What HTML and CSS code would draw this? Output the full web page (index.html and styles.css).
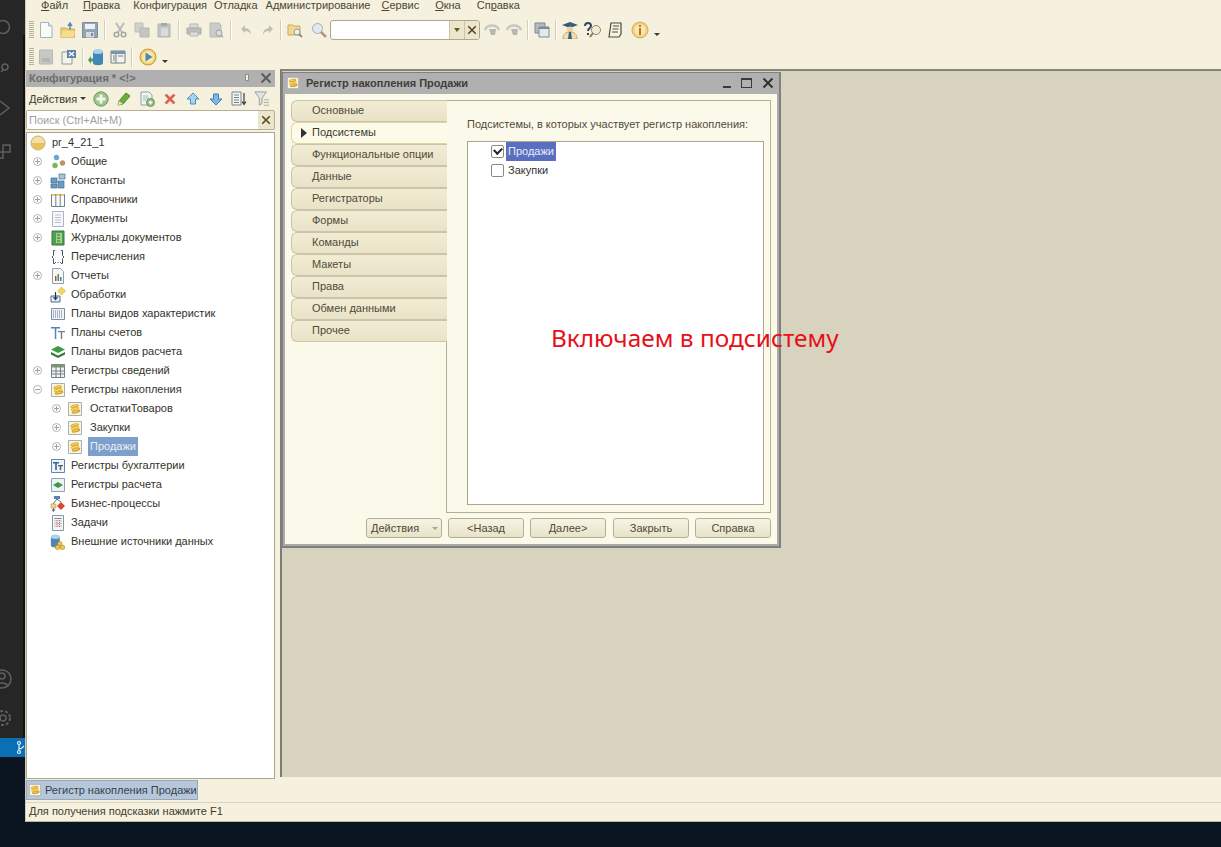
FILE: index.html
```html
<!DOCTYPE html>
<html lang="ru">
<head>
    <meta charset="UTF-8">
    <title>Конфигуратор</title>
    <link rel="stylesheet" href="styles.css">
</head>
<body>

<svg class="defs" width="0" height="0">
    <symbol id="i-x" viewBox="0 0 12 12"><path d="M1.500 1.500l9 9M10.500 1.500l-9 9" fill="none" stroke="currentColor" stroke-width="2"/></symbol>
    <symbol id="i-new" viewBox="0 0 16 16"><path d="M2.500.5h8l3.500 3.500v11.500H2.500z" fill="#fbfbf5" stroke="#9db2c6"/><path d="M10.500.5V4H14" fill="#dfe7ee" stroke="#9db2c6"/></symbol>
    <symbol id="i-open" viewBox="0 0 16 16"><path d="M1 6h5l1 1h7.500v8.500H1z" fill="#f0cf72" stroke="#c9ab5e"/><path d="M2 9h13l-1 6.500H1z" fill="#f7dc8e"/><path d="M10 8V2M8 4l2-3 2 3" fill="none" stroke="#5a8ab0" stroke-width="1.500"/></symbol>
    <symbol id="i-save" viewBox="0 0 16 16"><path d="M.5.500h15v15H.5z" fill="#93a5b4" stroke="#7d8d9a"/><path d="M3 2h10v5H3z" fill="#eef1f3"/><path d="M4 10h8v5.500H4z" fill="#d4dade"/><path d="M9 11h2v3H9z" fill="#7b8a96"/></symbol>
    <symbol id="i-cut" viewBox="0 0 16 16"><path d="M4 1l6 9M12 1l-6 9" stroke="#b9bbba" stroke-width="2" fill="none"/><circle cx="4.500" cy="12.500" r="2.300" fill="none" stroke="#a3a6a6" stroke-width="1.500"/><circle cx="11.500" cy="12.500" r="2.300" fill="none" stroke="#a3a6a6" stroke-width="1.500"/></symbol>
    <symbol id="i-copy" viewBox="0 0 16 16"><path d="M1 1h8v9H1z" fill="#cfd1cf" stroke="#bcbeba"/><path d="M6 6h9v9H6z" fill="#c2c5c4" stroke="#b4b6b4"/></symbol>
    <symbol id="i-paste" viewBox="0 0 16 16"><path d="M2 2h12v13H2z" fill="#c2c5c3" stroke="#b0b3b1"/><path d="M5 1h6v3H5z" fill="#a3a7a6"/><path d="M5 6h7v8H5z" fill="#d9dbd8"/></symbol>
    <symbol id="i-print" viewBox="0 0 16 16"><path d="M4 2h8v4H4z" fill="#dcddda" stroke="#b5b7b4"/><path d="M1 6h14v6H1z" fill="#bbbebc" stroke="#a9acaa"/><path d="M4 10h8v4H4z" fill="#dfe0dd" stroke="#b5b7b4"/></symbol>
    <symbol id="i-preview" viewBox="0 0 16 16"><path d="M2 1h9l2 2v12H2z" fill="#c9ccca" stroke="#b8bbb9"/><circle cx="11" cy="11" r="3" fill="#dcdedb" stroke="#a0a3a1"/><path d="M13 13l2 2" stroke="#a0a3a1" stroke-width="1.500"/></symbol>
    <symbol id="i-undo" viewBox="0 0 16 16"><path d="M3 7l4-4v3c3 0 6 2 6 7-1-3-3-4-6-4v2z" fill="#bfc0b8"/></symbol>
    <symbol id="i-redo" viewBox="0 0 16 16"><path d="M13 7L9 3v3c-3 0-6 2-6 7 1-3 3-4 6-4v2z" fill="#bfc0b8"/></symbol>
    <symbol id="i-find" viewBox="0 0 16 16"><path d="M1 3h5l1 1h6v9H1z" fill="#f3d88c" stroke="#c4a968"/><circle cx="10" cy="10" r="3" fill="#e6eef2" stroke="#8f9dab"/><path d="M12 12l3 3" stroke="#a58a66" stroke-width="2"/></symbol>
    <symbol id="i-search" viewBox="0 0 16 16"><circle cx="6.500" cy="6.500" r="5" fill="#dfe9ef" stroke="#a2aeb9"/><path d="M10 10l5 5" stroke="#ab9c84" stroke-width="2.500"/></symbol>
    <symbol id="i-nav" viewBox="0 0 16 16"><path d="M1 8c2-6 12-6 14 0" fill="none" stroke="#c6c7c0" stroke-width="2.500"/><path d="M5 7h7l-1 6H7z" fill="#b5b7b1"/></symbol>
    <symbol id="i-windows" viewBox="0 0 16 16"><path d="M1 1h10v10H1z" fill="#b2bbc3" stroke="#7f8a94"/><path d="M5 5h10v10H5z" fill="#e4e9ed" stroke="#7f8a94"/><path d="M5 5h10v2H5z" fill="#7f8a94"/></symbol>
    <symbol id="i-cap" viewBox="0 0 18 18"><path d="M1 4l8-3 8 3-8 3z" fill="#2f5f7c"/><circle cx="9" cy="8.500" r="3" fill="#f2cf9a"/><path d="M2 18c0-5 3-7 7-7s7 2 7 7z" fill="#efe2b0" stroke="#c4a968"/><path d="M8 11h2l1 7H7z" fill="#3a5f7a"/></symbol>
    <symbol id="i-helpfind" viewBox="0 0 18 18"><path d="M1 5c0-4 6-4 6 0 0 2-3 2-3 5" fill="none" stroke="#33475c" stroke-width="2"/><path d="M3 12h2v2H3z" fill="#33475c"/><circle cx="12" cy="9" r="4.500" fill="#f3ecd2" stroke="#8a8772"/><path d="M9 12l-3 4" stroke="#8a7a52" stroke-width="2"/></symbol>
    <symbol id="i-note" viewBox="0 0 16 16"><path d="M4 1h10v11l-2 3H2z" fill="#f8f4e2" stroke="#4d4a3d" stroke-width="1.200"/><path d="M6 4h6M5.500 7h6M5 10h6" stroke="#4d4a3d"/></symbol>
    <symbol id="i-info" viewBox="0 0 18 18"><circle cx="9" cy="9" r="8" fill="#f3d27c" stroke="#d4ad63"/><circle cx="9" cy="9" r="5.500" fill="#f9e8b4"/><path d="M8 4h2v2H8zM8 7h2v7H8z" fill="#b8722a"/></symbol>
    <symbol id="i-sheet" viewBox="0 0 16 16"><path d="M1.500 1h13v14h-13z" fill="#c6c8c5" stroke="#b6b8b5"/><path d="M4 9h8v4H4z" fill="#b4b6b4"/></symbol>
    <symbol id="i-form" viewBox="0 0 16 16"><path d="M1 3h10v12H1z" fill="#f3f3ea" stroke="#8d9aa5"/><path d="M6 1h9v8H6z" fill="#5d84a6"/><path d="M8 3l5 4M13 3L8 7" stroke="#fff" stroke-width="1.400"/></symbol>
    <symbol id="i-db" viewBox="0 0 18 18"><path d="M6 3v12c0 3 10 3 10 0V3z" fill="#3f87b8"/><ellipse cx="11" cy="3.500" rx="5" ry="2.500" fill="#a9d2e8"/><path d="M1 12l3-4v2.500h2v3H4V16z" fill="#4fa04f"/></symbol>
    <symbol id="i-list" viewBox="0 0 16 16"><path d="M1 2h14v12H1z" fill="#f4f3e8" stroke="#70808e"/><path d="M1 2h14v3H1z" fill="#7a95ad"/><path d="M6 5v9" stroke="#70808e"/><path d="M3 7h2M3 9h2M3 11h2M8 7h5" stroke="#70808e"/></symbol>
    <symbol id="i-run" viewBox="0 0 18 18"><circle cx="9" cy="9" r="8" fill="#f1cf6f" stroke="#c39b3f"/><circle cx="9" cy="9" r="6" fill="#f8e7ac"/><path d="M6.500 4.500l7 4.500-7 4.500z" fill="#4e86b8"/></symbol>
    <symbol id="i-add" viewBox="0 0 16 16"><circle cx="8" cy="8" r="7.200" fill="#9cc48a" stroke="#6f9a62"/><path d="M6.500 3.500h3v3h3v3h-3v3h-3v-3h-3v-3h3z" fill="#f0f6ea"/></symbol>
    <symbol id="i-edit" viewBox="0 0 16 16"><path d="M3 10l7-8 4 3-7 8-5 1z" fill="#6cae3e" stroke="#4d8a2b"/><path d="M3 10l4 3-5 1z" fill="#e9e3c2"/></symbol>
    <symbol id="i-addpage" viewBox="0 0 16 16"><path d="M2 1h8l3 3v10H2z" fill="#f3f4ee" stroke="#8da0b0"/><path d="M4 5h5M4 7h6M4 9h3" stroke="#a9b6c0"/><circle cx="11.500" cy="11.500" r="4" fill="#89b87a" stroke="#6f9a62"/><path d="M10.700 9.500h1.600v1.200h1.200v1.600h-1.200v1.200h-1.600v-1.200H9.500v-1.600h1.200z" fill="#fff"/></symbol>
    <symbol id="i-del" viewBox="0 0 16 16"><path d="M3 4.500L4.500 3 8 6.500 11.500 3 13 4.500 9.500 8l3.500 3.500-1.500 1.500L8 9.500 4.500 13 3 11.500 6.500 8z" fill="#dc5e50" stroke="#c24a3d" stroke-width=".5"/></symbol>
    <symbol id="i-up" viewBox="0 0 16 16"><path d="M8 2l6 6h-3.500v5h-5V8H2z" fill="#a9d4ee" stroke="#4b8dbd"/></symbol>
    <symbol id="i-down" viewBox="0 0 16 16"><path d="M8 14L2 8h3.500V3h5v5H14z" fill="#7fb7e4" stroke="#3f7fb5"/></symbol>
    <symbol id="i-sort" viewBox="0 0 16 16"><path d="M1 1h9v13H1z" fill="#f4f5f0" stroke="#73838f"/><path d="M3 4h5M3 6.500h5M3 9h5M3 11.500h5" stroke="#73838f"/><path d="M13 2v11M11 10.500l2 3 2-3" fill="none" stroke="#3b3b3b" stroke-width="1.200"/></symbol>
    <symbol id="i-filter" viewBox="0 0 18 18"><path d="M1 1h13L9 8v6l-3 2V8z" fill="#dfe3e2" stroke="#8f9a9c"/><path d="M11 10h6M11 13h6M11 16h6" stroke="#9aa39f"/></symbol>
    <symbol id="i-root" viewBox="0 0 16 16"><circle cx="8" cy="8" r="7" fill="#f2e2a8" stroke="#c9ad62"/><path d="M1.500 8h13a6.500 6.500 0 0 1-13 0z" fill="#e6c25a"/></symbol>
    <symbol id="i-common" viewBox="0 0 16 16"><circle cx="6.500" cy="3.500" r="2.700" fill="#6fa5cf"/><circle cx="12.500" cy="9" r="2.700" fill="#b39a63"/><circle cx="5" cy="11.500" r="2.700" fill="#77b957"/></symbol>
    <symbol id="i-const" viewBox="0 0 16 16"><path d="M1 5h6v5H1zM1 11h6v4H1zM8 8h6v7H8z" fill="#6f9ac0" stroke="#3f6f98" stroke-width=".7"/><path d="M9 1h6v5H9z" fill="#a6c5df" stroke="#3f6f98" stroke-width=".7"/></symbol>
    <symbol id="i-catalog" viewBox="0 0 16 16"><path d="M1.500 2.500h13v12h-13z" fill="#fbfbf6" stroke="#6f8394"/><path d="M5.800 2.500v12M10.200 2.500v12" stroke="#6f8394"/><path d="M2 2h3v2H2zM6.500 2h3v2h-3zM11 2h3v2h-3z" fill="#e9cf6b"/></symbol>
    <symbol id="i-doc" viewBox="0 0 16 16"><path d="M2.500.5h11v15h-11z" fill="#f5f7fa" stroke="#a9b6c4"/><path d="M5 4h6M5 6.500h6M5 9h6M5 11.500h6" stroke="#b8c3ce"/></symbol>
    <symbol id="i-journal" viewBox="0 0 16 16"><path d="M2 1h12v14H2z" fill="#4fa04f" stroke="#377a37"/><path d="M6 3h6v10H6z" fill="#9fd08f"/><path d="M7 5h3M7 8h3M7 11h3" stroke="#2e6d2e"/></symbol>
    <symbol id="i-enum" viewBox="0 0 16 16"><path d="M5 1.500H3.500v5L2 8l1.500 1.500v5H5M11 1.500h1.500v5L14 8l-1.500 1.500v5H11" fill="none" stroke="#4a5560"/><path d="M5 13h1v1H5zM7.500 13h1v1h-1zM10 13h1v1h-1z" fill="#4a5560"/></symbol>
    <symbol id="i-report" viewBox="0 0 16 16"><path d="M2.500.5h8l3 3v12h-11z" fill="#f7f8fa" stroke="#8f9fae"/><path d="M5 8h1.500v5H5z" fill="#c0483a"/><path d="M7.500 6H9v7H7.500z" fill="#4a8d4a"/><path d="M10 9h1.500v4H10z" fill="#4c78ad"/></symbol>
    <symbol id="i-proc" viewBox="0 0 16 16"><path d="M11.500 0l4 4-4 4-4-4z" fill="#f2d45f" stroke="#d3b54a" stroke-width=".6"/><path d="M1 9h9v6H1z" fill="#e6edf2" stroke="#476e92"/><path d="M5.500 5v7M3.500 10l2 2.500 2-2.500" fill="none" stroke="#22364a" stroke-width="1.200"/></symbol>
    <symbol id="i-chars" viewBox="0 0 16 16"><path d="M1.500 2.500h13v11h-13z" fill="#f1f4f7" stroke="#7a8fa3"/><path d="M3 5h10M3 7h10M3 9h10M3 11h10" stroke="#5f7890" stroke-dasharray="1 1"/></symbol>
    <symbol id="i-acc" viewBox="0 0 16 16"><path d="M1 2h9v1.500H6.300V14H4.800V3.500H1z" fill="#4f86b5"/><path d="M8 6h7v1.300h-2.800V14h-1.400V7.300H8z" fill="#6b7f90"/></symbol>
    <symbol id="i-calc" viewBox="0 0 16 16"><path d="M8 2l7 3.500L8 9 1 5.500z" fill="#3f9a45"/><path d="M1 8l7 3.500L15 8v2.500L8 14l-7-3.500z" fill="#2f7f38"/></symbol>
    <symbol id="i-info-reg" viewBox="0 0 16 16"><path d="M1.500 1.500h13v13h-13z" fill="#f3f4e6" stroke="#6f8394"/><path d="M1.500 1.500h13v3h-13z" fill="#7f9a6a"/><path d="M1.500 8h13M1.500 11h13M6 1.500v13M10.500 1.500v13" stroke="#6f8394"/></symbol>
    <symbol id="i-reg" viewBox="0 0 16 16"><path d="M1.500 1.500h13v13h-13z" fill="#fbf5dc" stroke="#a3b1bb"/><g transform="rotate(-14 8 8)"><ellipse cx="8.300" cy="10.800" rx="4.400" ry="1.700" fill="#cf9a22"/><ellipse cx="8" cy="8" rx="4.400" ry="1.700" fill="#e8b93a"/><ellipse cx="8.300" cy="5.200" rx="4.400" ry="1.700" fill="#e2ac2c"/><path d="M5 5h6M5 7.900h6M5 10.700h6" stroke="#f9e6a0" stroke-width=".7"/></g></symbol>
    <symbol id="i-book" viewBox="0 0 16 16"><path d="M1.500 1.500h13v13h-13z" fill="#edf3f8" stroke="#5e87aa"/><path d="M3 4h6v1.500H6.800V12H5.200V5.500H3z" fill="#356a96"/><path d="M8 7h5v1.200h-1.800V12H9.800V8.200H8z" fill="#55606a"/></symbol>
    <symbol id="i-calcreg" viewBox="0 0 16 16"><path d="M1.500 1.500h13v13h-13z" fill="#eef3f6" stroke="#8ea4b6"/><path d="M8 5l5 3-5 3-5-3z" fill="#3f9a45"/></symbol>
    <symbol id="i-bp" viewBox="0 0 16 16"><path d="M4 0h6v3H4z" fill="#4f86b5"/><path d="M11 6l4 4-4 4-4-4z" fill="#d8483a"/><path d="M1 8h5v4H1z" fill="#f2d48a" stroke="#b59a55" stroke-width=".6"/><path d="M7 3L3 8M7 3l4 3M3.500 12v3" stroke="#7a6a5a"/><path d="M1.500 13.500h4l-2 2.500z" fill="#3f6f98"/></symbol>
    <symbol id="i-task" viewBox="0 0 16 16"><path d="M2.500.5h11v15h-11z" fill="#f5f6f8" stroke="#8896a5"/><path d="M4.500 3h7v1h-7z" fill="#7c8a98"/><path d="M4.500 6h7M4.500 8.500h7M4.500 11h7M7 5v8M9.500 5v8" stroke="#b47a70" stroke-dasharray="1 1"/></symbol>
    <symbol id="i-ext" viewBox="0 0 18 18"><path d="M1 3v10c0 3 10 3 10 0V3z" fill="#4e86b8"/><ellipse cx="6" cy="3" rx="5" ry="2.500" fill="#b0d3e8"/><circle cx="11" cy="11" r="2.600" fill="#f0c64a" stroke="#a07b20" stroke-width=".6"/><circle cx="8.500" cy="15" r="2.600" fill="#f0c64a" stroke="#a07b20" stroke-width=".6"/><circle cx="14" cy="15" r="2.600" fill="#f0c64a" stroke="#a07b20" stroke-width=".6"/></symbol>
</svg>

<div class="screen">
    <svg class="strip" width="25" height="757" viewBox="0 0 25 757">
        <rect width="25" height="757" fill="#262627"/>
        <rect x="23" y="35" width="2" height="703" fill="#111112"/>
        <rect y="738" width="25" height="19" fill="#0a6fb5"/>
        <g fill="none" stroke="#5f5f60" stroke-width="1.500">
            <circle cx="3" cy="27" r="6.500"/>
            <circle cx="5" cy="67" r="3"/><path d="M1 72l2-2"/>
            <path d="M0 101l9 7-9 7"/>
            <path d="M3 145h7v7H3zM-3 152h6v6h-6z"/>
            <circle cx="2" cy="679" r="9"/><circle cx="2" cy="676" r="3"/><path d="M-4 686c2-4 10-4 12 0"/>
            <circle cx="3" cy="718" r="3"/><circle cx="3" cy="718" r="7" stroke-dasharray="3 2" stroke-width="2"/>
        </g>
        <g fill="none" stroke="#e8f2fa" stroke-width="1.200">
            <circle cx="19" cy="743" r="1.500"/><circle cx="19" cy="752" r="1.500"/><path d="M19 745v5M19 749c3 0 4-2 5-3"/>
        </g>
    </svg>

    <div class="app">
        <div class="menu">
            <a class="gap-15"><u>Ф</u>айл</a>
            <a class="gap-13"><u>П</u>равка</a>
            <a class="gap-7">Конфигурация</a>
            <a class="gap-8">Отладка</a>
            <a class="gap-11">Администрирование</a>
            <a class="gap-16"><u>С</u>ервис</a>
            <a class="gap-16"><u>О</u>кна</a>
            <a>Сп<u>р</u>авка</a>
        </div>

        <div class="toolbar tb-main">
            <span class="grip"></span>
            <span class="tool"><svg><use href="#i-new"/></svg></span>
            <span class="tool"><svg><use href="#i-open"/></svg></span>
            <span class="tool"><svg><use href="#i-save"/></svg></span>
            <span class="sep"></span>
            <span class="tool"><svg><use href="#i-cut"/></svg></span>
            <span class="tool"><svg><use href="#i-copy"/></svg></span>
            <span class="tool"><svg><use href="#i-paste"/></svg></span>
            <span class="sep"></span>
            <span class="tool"><svg><use href="#i-print"/></svg></span>
            <span class="tool"><svg><use href="#i-preview"/></svg></span>
            <span class="sep"></span>
            <span class="tool"><svg><use href="#i-undo"/></svg></span>
            <span class="tool"><svg><use href="#i-redo"/></svg></span>
            <span class="sep sep-tight"></span>
            <span class="tool tool-find"><svg><use href="#i-find"/></svg></span>
            <span class="tool tool-wide"><svg><use href="#i-search"/></svg></span>
            <div class="combo">
                <span class="combo-field"></span>
                <span class="combo-btn"><i class="caret"></i></span>
                <span class="combo-btn"><svg><use href="#i-x"/></svg></span>
            </div>
            <span class="tool"><svg><use href="#i-nav"/></svg></span>
            <span class="tool"><svg><use href="#i-nav"/></svg></span>
            <span class="sep sep-mid"></span>
            <span class="tool"><svg><use href="#i-windows"/></svg></span>
            <span class="sep sep-mid"></span>
            <span class="tool"><svg class="big"><use href="#i-cap"/></svg></span>
            <span class="tool tool-help"><svg class="big"><use href="#i-helpfind"/></svg></span>
            <span class="tool"><svg><use href="#i-note"/></svg></span>
            <span class="tool tool-info"><svg class="big"><use href="#i-info"/></svg></span>
            <i class="caret caret-low"></i>
        </div>

        <div class="toolbar tb-second">
            <span class="grip"></span>
            <span class="tool"><svg><use href="#i-sheet"/></svg></span>
            <span class="tool tool-form"><svg><use href="#i-form"/></svg></span>
            <span class="sep sep-small"></span>
            <span class="tool"><svg class="big"><use href="#i-db"/></svg></span>
            <span class="tool"><svg><use href="#i-list"/></svg></span>
            <span class="sep sep-small"></span>
            <span class="tool tool-run"><svg class="big"><use href="#i-run"/></svg></span>
            <i class="caret caret-low"></i>
        </div>

        <div class="main">
            <aside class="panel">
                <div class="panel-head">
                    <span class="panel-title">Конфигурация * &lt;!&gt;</span>
                    <span class="panel-pin"></span>
                    <svg class="panel-close"><use href="#i-x"/></svg>
                </div>
                <div class="panel-actions">
                    <span class="actions-label">Действия</span><i class="caret caret-action"></i>
                    <span class="act"><svg><use href="#i-add"/></svg></span>
                    <span class="act"><svg><use href="#i-edit"/></svg></span>
                    <span class="act"><svg><use href="#i-addpage"/></svg></span>
                    <span class="act"><svg><use href="#i-del"/></svg></span>
                    <span class="act"><svg><use href="#i-up"/></svg></span>
                    <span class="act"><svg><use href="#i-down"/></svg></span>
                    <span class="act"><svg><use href="#i-sort"/></svg></span>
                    <span class="act"><svg><use href="#i-filter"/></svg></span>
                </div>
                <div class="panel-search">
                    <span class="search-field">Поиск (Ctrl+Alt+M)</span>
                    <span class="search-x"><svg><use href="#i-x"/></svg></span>
                </div>
                <ul class="tree">
                    <li class="row row-root"><svg><use href="#i-root"/></svg><span>pr_4_21_1</span></li>
                    <li class="row"><b class="exp"></b><svg><use href="#i-common"/></svg><span>Общие</span></li>
                    <li class="row"><b class="exp"></b><svg><use href="#i-const"/></svg><span>Константы</span></li>
                    <li class="row"><b class="exp"></b><svg><use href="#i-catalog"/></svg><span>Справочники</span></li>
                    <li class="row"><b class="exp"></b><svg><use href="#i-doc"/></svg><span>Документы</span></li>
                    <li class="row"><b class="exp"></b><svg><use href="#i-journal"/></svg><span>Журналы документов</span></li>
                    <li class="row"><b class="exp exp-none"></b><svg><use href="#i-enum"/></svg><span>Перечисления</span></li>
                    <li class="row"><b class="exp"></b><svg><use href="#i-report"/></svg><span>Отчеты</span></li>
                    <li class="row"><b class="exp exp-none"></b><svg><use href="#i-proc"/></svg><span>Обработки</span></li>
                    <li class="row"><b class="exp exp-none"></b><svg><use href="#i-chars"/></svg><span>Планы видов характеристик</span></li>
                    <li class="row"><b class="exp exp-none"></b><svg><use href="#i-acc"/></svg><span>Планы счетов</span></li>
                    <li class="row"><b class="exp exp-none"></b><svg><use href="#i-calc"/></svg><span>Планы видов расчета</span></li>
                    <li class="row"><b class="exp"></b><svg><use href="#i-info-reg"/></svg><span>Регистры сведений</span></li>
                    <li class="row"><b class="exp exp-open"></b><svg><use href="#i-reg"/></svg><span>Регистры накопления</span></li>
                    <li class="row row-child"><b class="exp"></b><svg><use href="#i-reg"/></svg><span>ОстаткиТоваров</span></li>
                    <li class="row row-child"><b class="exp"></b><svg><use href="#i-reg"/></svg><span>Закупки</span></li>
                    <li class="row row-child row-current"><b class="exp"></b><svg><use href="#i-reg"/></svg><span>Продажи</span></li>
                    <li class="row"><b class="exp exp-none"></b><svg><use href="#i-book"/></svg><span>Регистры бухгалтерии</span></li>
                    <li class="row"><b class="exp exp-none"></b><svg><use href="#i-calcreg"/></svg><span>Регистры расчета</span></li>
                    <li class="row"><b class="exp exp-none"></b><svg><use href="#i-bp"/></svg><span>Бизнес-процессы</span></li>
                    <li class="row"><b class="exp exp-none"></b><svg><use href="#i-task"/></svg><span>Задачи</span></li>
                    <li class="row"><b class="exp exp-none"></b><svg><use href="#i-ext"/></svg><span>Внешние источники данных</span></li>
                </ul>
            </aside>

            <section class="workspace">
                <div class="window">
                    <div class="win-title">
                        <span class="win-icon"><svg><use href="#i-reg"/></svg></span>
                        <span class="win-name">Регистр накопления Продажи</span>
                        <span class="win-min"></span>
                        <span class="win-max"></span>
                        <svg class="win-close"><use href="#i-x"/></svg>
                    </div>
                    <div class="win-body">
                        <div class="tabs-area">
                            <ul class="tabs">
                                <li>Основные</li>
                                <li class="tab-on">Подсистемы</li>
                                <li>Функциональные опции</li>
                                <li>Данные</li>
                                <li>Регистраторы</li>
                                <li>Формы</li>
                                <li>Команды</li>
                                <li>Макеты</li>
                                <li>Права</li>
                                <li>Обмен данными</li>
                                <li>Прочее</li>
                            </ul>
                            <div class="tab-page">
                                <p class="page-label">Подсистемы, в которых участвует регистр накопления:</p>
                                <div class="check-list">
                                    <div class="check-row"><span class="box box-on"></span><span class="check-text check-sel">Продажи</span></div>
                                    <div class="check-row"><span class="box"></span><span class="check-text">Закупки</span></div>
                                </div>
                            </div>
                        </div>
                        <div class="win-foot">
                            <button class="btn btn-menu">Действия<i class="caret caret-dim"></i></button>
                            <button class="btn">&lt;Назад</button>
                            <button class="btn">Далее&gt;</button>
                            <button class="btn btn-far">Закрыть</button>
                            <button class="btn">Справка</button>
                        </div>
                    </div>
                </div>
                <div class="note">Включаем в подсистему</div>
            </section>
        </div>

        <div class="taskbar">
            <span class="task"><span class="win-icon"><svg><use href="#i-reg"/></svg></span>Регистр накопления Продажи</span>
        </div>
        <div class="status">Для получения подсказки нажмите F1</div>
    </div>
</div>

</body>
</html>
```

FILE: styles.css
```css
* {
    box-sizing: border-box;
}
html, body {
    margin: 0;
    height: 100%;
}
body {
    background-color: #0b1522;
    font-family: "Liberation Sans", Arial, sans-serif;
    font-size: 11px;
    color: #3a3a30;
    overflow: hidden;
}
.defs {
    position: absolute;
}
.screen {
    display: flex;
    width: 1221px;
    height: 822px;
}
.strip {
    flex: none;
    display: block;
}
.app {
    flex: 1;
    min-width: 0;
    display: flex;
    flex-direction: column;
    background-color: #f5f1de;
    border-left: 1px solid #cfcbb5;
    border-bottom: 1px solid #b8b5a2;
}

/* menu */
.menu {
    display: flex;
    height: 12px;
    padding-left: 15px;
    line-height: 11px;
    overflow: hidden;
    color: #4a4736;
}
.gap-7 { margin-right: 7px; }
.gap-8 { margin-right: 8px; }
.gap-11 { margin-right: 11px; }
.gap-13 { margin-right: 13px; }
.gap-15 { margin-right: 15px; }
.gap-16 { margin-right: 16px; }

/* toolbars */
.toolbar {
    display: flex;
    align-items: center;
    padding-left: 3px;
}
.tb-main {
    height: 36px;
}
.tb-second {
    height: 21px;
    padding-bottom: 3px;
}
.grip {
    width: 5px;
    height: 18px;
    margin-right: 1px;
    background-image: repeating-linear-gradient(to bottom, #b5b29c 0, #b5b29c 1px, transparent 1px, transparent 2px);
}
.tool {
    flex: none;
    width: 22px;
    height: 22px;
    display: flex;
    align-items: center;
    justify-content: center;
}
.tool svg {
    width: 16px;
    height: 16px;
}
.tool svg.big {
    width: 18px;
    height: 18px;
}
.tool-find { margin-left: 1px; }
.tool-wide { margin-left: 2px; }
.tool-help { margin-left: 1px; }
.tool-info { margin-left: 3px; }
.tool-form { margin-left: 1px; }
.tool-run { margin-left: 3px; }
.sep {
    flex: none;
    width: 2px;
    height: 20px;
    margin: 0 3px;
    border-left: 1px solid #d3cfba;
    border-right: 1px solid #fff;
}
.sep-tight { margin: 0 1px; }
.sep-mid { margin: 0 2px; }
.sep-small { margin: 0 1px 0 2px; }
.caret {
    display: inline-block;
    border-left: 3px solid transparent;
    border-right: 3px solid transparent;
    border-top: 3px solid #3d3a2c;
}
.caret-low {
    margin: 9px 0 0 3px;
    align-self: center;
}
.combo {
    flex: none;
    display: flex;
    width: 150px;
    height: 20px;
    margin-right: 1px;
    border: 1px solid #aca78e;
    border-radius: 3px;
    background-color: #fff;
    overflow: hidden;
}
.combo-field {
    flex: 1;
}
.combo-btn {
    flex: none;
    width: 15px;
    display: flex;
    align-items: center;
    justify-content: center;
    background-color: #ece6cd;
    border-left: 1px solid #c8c3aa;
    color: #5a4a20;
}
.combo-btn svg {
    width: 10px;
    height: 10px;
}
.combo-btn .caret {
    border-top-color: #6a5a20;
    border-top-width: 4px;
}

/* main area */
.main {
    flex: 1;
    min-height: 0;
    display: flex;
}
.panel {
    flex: none;
    width: 249px;
    display: flex;
    flex-direction: column;
}
.panel-head {
    display: flex;
    align-items: center;
    height: 17px;
    margin-top: 1px;
    padding: 0 3px 2px;
    background-color: #b0b0b0;
    color: #6c6c6c;
    font-weight: bold;
}
.panel-title {
    flex: 1;
}
.panel-pin {
    width: 4px;
    height: 7px;
    margin-right: 11px;
    background-color: #f1efe2;
    border: 1px solid #8d8d8d;
}
.panel-close {
    width: 12px;
    height: 12px;
    color: #5c5c5c;
}
.panel-actions {
    display: flex;
    align-items: center;
    height: 23px;
    padding-left: 3px;
}
.actions-label {
    color: #3d3b2c;
}
.caret-action {
    margin-left: 3px;
    margin-right: 3px;
}
.act {
    flex: none;
    width: 23px;
    display: flex;
    justify-content: center;
}
.act svg {
    width: 16px;
    height: 16px;
}
.panel-search {
    display: flex;
    height: 20px;
    border: 1px solid #b4af96;
    border-radius: 2px;
    background-color: #ece6cd;
}
.search-field {
    flex: 1;
    padding-left: 2px;
    line-height: 19px;
    background-color: #fff;
    color: #a0a0a0;
}
.search-x {
    width: 16px;
    display: flex;
    align-items: center;
    justify-content: center;
    color: #5a4a20;
}
.search-x svg {
    width: 10px;
    height: 10px;
}
.tree {
    flex: 1;
    margin: 2px 0 0;
    padding: 0;
    list-style: none;
    background-color: #fff;
    border: 1px solid #aba68f;
}
.row {
    display: flex;
    align-items: center;
    height: 19px;
    padding-left: 6px;
    color: #33332c;
}
.row svg {
    flex: none;
    width: 16px;
    height: 16px;
    margin-left: 3px;
    margin-right: 3px;
}
.row .exp + svg {
    margin-left: 8px;
}
.row span {
    padding: 0 2px;
    line-height: 19px;
}
.row-root {
    padding-left: 0;
}
.row-root svg {
    margin-right: 4px;
}
.row-child {
    padding-left: 25px;
}
.row-child .exp + svg {
    margin-left: 6px;
    margin-right: 5px;
}
.row-current span {
    background-color: #7d9fcb;
    color: #e8eef6;
}
.exp {
    flex: none;
    width: 9px;
    height: 9px;
    border: 1px solid #b4b4b4;
    border-radius: 50%;
    background: linear-gradient(#a0a0a0, #a0a0a0) center / 5px 1px no-repeat, linear-gradient(#a0a0a0, #a0a0a0) center / 1px 5px no-repeat;
}
.exp-open {
    background: linear-gradient(#a0a0a0, #a0a0a0) center / 5px 1px no-repeat;
}
.exp-none {
    visibility: hidden;
}

/* workspace and window */
.workspace {
    flex: 1;
    position: relative;
    margin: 0 0 2px 5px;
    background-color: #d8d3bf;
    border-left: 2px solid #7d7d74;
    border-top: 2px solid #85857c;
}
.window {
    position: absolute;
    left: -1px;
    top: 1px;
    width: 500px;
    height: 476px;
    display: flex;
    flex-direction: column;
    background-color: #a9a9a9;
    border: 2px solid #808080;
    border-width: 1px 2px 2px 2px;
}
.win-title {
    flex: none;
    display: flex;
    align-items: center;
    height: 21px;
    padding: 0 3px 2px;
    background-color: #b0b0b0;
}
.win-icon {
    flex: none;
    display: inline-flex;
    width: 14px;
    height: 14px;
}
.win-icon svg {
    width: 14px;
    height: 14px;
}
.win-name {
    flex: 1;
    margin-left: 6px;
    font-weight: bold;
    color: #3e3e3a;
}
.win-min {
    width: 8px;
    height: 2px;
    margin: 9px 10px 0 0;
    background-color: #3a3a3a;
}
.win-max {
    width: 11px;
    height: 10px;
    margin-right: 10px;
    border: 1px solid #3a3a3a;
    border-top-width: 2px;
}
.win-close {
    width: 12px;
    height: 12px;
    margin-right: 2px;
    color: #333;
}
.win-body {
    flex: 1;
    min-height: 0;
    display: flex;
    flex-direction: column;
    margin: 0 2px 2px;
    padding: 6px;
    background-color: #fbf9ea;
}
.tabs-area {
    flex: 1;
    min-height: 0;
    display: flex;
}
.tabs {
    flex: none;
    width: 156px;
    margin: 0 -1px 0 0;
    padding: 0;
    list-style: none;
    color: #4f4b38;
    position: relative;
}
.tabs li {
    height: 22px;
    padding-left: 20px;
    line-height: 19px;
    background: linear-gradient(#f2ecd4, #e9e2c7);
    border: 1px solid #c9c4aa;
    border-right: none;
    border-top-left-radius: 6px;
    border-bottom-left-radius: 6px;
}
.tabs .tab-on {
    background: #fcfae9;
    position: relative;
    z-index: 1;
    border-color: #e0d3a0;
    border-right: 1px solid #fcfae9;
    color: #3d3a2a;
}
.tab-on::before {
    content: "";
    position: absolute;
    left: 9px;
    top: 5px;
    border-top: 5px solid transparent;
    border-bottom: 5px solid transparent;
    border-left: 6px solid #333;
}
.tab-page {
    flex: 1;
    min-width: 0;
    display: flex;
    flex-direction: column;
    padding: 0 6px 7px 20px;
    border: 1px solid #b3ae96;
}
.page-label {
    margin: 17px 0 10px;
    line-height: 13px;
    color: #4f4b38;
}
.check-list {
    flex: 1;
    background-color: #fff;
    border: 1px solid #aba68f;
}
.check-row {
    display: flex;
    align-items: center;
    height: 19px;
    padding-left: 23px;
    color: #33332c;
}
.box {
    flex: none;
    width: 13px;
    height: 13px;
    margin-right: 2px;
    border: 1px solid #8c8c7c;
    border-radius: 2px;
    background-color: #fff;
}
.box-on {
    position: relative;
}
.box-on::after {
    content: "";
    position: absolute;
    left: 2px;
    top: 1px;
    width: 6px;
    height: 4px;
    border-left: 2px solid #222;
    border-bottom: 2px solid #222;
    transform: rotate(-45deg);
}
.check-text {
    padding: 0 2px;
    line-height: 19px;
}
.check-sel {
    background-color: #5b6fc0;
    color: #e8ebf8;
}
.win-foot {
    flex: none;
    display: flex;
    justify-content: flex-end;
    gap: 6px;
    padding-top: 5px;
    height: 25px;
}
.btn {
    width: 76px;
    height: 20px;
    padding: 0;
    font-family: inherit;
    font-size: 11px;
    color: #4f4b38;
    border: 1px solid #b3ae96;
    border-radius: 3px;
    background: linear-gradient(#f7f4e3, #e8e2c9);
}
.btn-far {
    margin-left: 1px;
}
.btn-menu {
    display: flex;
    align-items: center;
    padding-left: 4px;
}
.caret-dim {
    margin-left: 13px;
    border-top-color: #a9a48c;
}
.note {
    position: absolute;
    left: 269px;
    top: 252px;
    font-family: "Noto Sans", sans-serif;
    font-size: 24.4px;
    line-height: 30px;
    color: #e6101a;
    white-space: nowrap;
}

/* bottom */
.taskbar {
    flex: none;
    height: 23px;
    padding-top: 1px;
}
.task {
    display: inline-flex;
    align-items: center;
    gap: 3px;
    width: 172px;
    height: 20px;
    padding-left: 1px;
    background-color: #b5c7dc;
    border: 1px solid #9fa7a8;
    color: #3a3f48;
    white-space: nowrap;
}
.status {
    flex: none;
    height: 19px;
    padding-left: 3px;
    line-height: 17px;
    border-top: 1px solid #d8d4be;
    color: #3d3b2c;
}
```
